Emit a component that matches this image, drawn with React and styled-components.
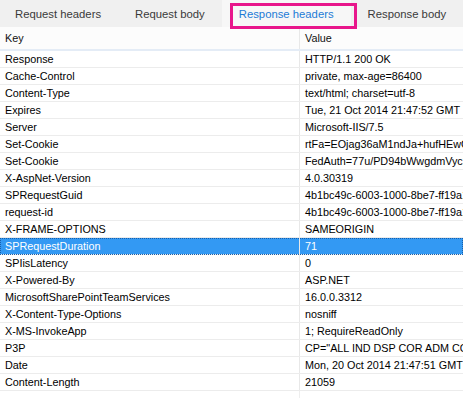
import React from 'react';
import styled, { createGlobalStyle } from 'styled-components';

const Global = createGlobalStyle`
    html, body {
        margin: 0;
        padding: 0;
        background: #ffffff;
    }
    body {
        font-family: "Liberation Sans", Arial, sans-serif;
    }
`;

const Frame = styled.div`
    position: relative;
    width: 463px;
    height: 414px;
    overflow: hidden;
    background: #ffffff;
`;

const TabBar = styled.div`
    display: flex;
    height: 27px;
    background: #f0f0f0;
    margin-left: -2px;
`;

const Tab = styled.div`
    display: flex;
    align-items: center;
    padding: 0 17px;
    font-size: 11.3px;
    white-space: nowrap;
    color: ${(p) => (p.active ? '#1c7bd6' : '#3a3a3a')};
    background: ${(p) => (p.active ? '#f7f7f7' : '#f0f0f0')};
`;

const Highlight = styled.div`
    position: absolute;
    left: 230px;
    top: 3px;
    width: 127px;
    height: 26px;
    box-sizing: border-box;
    border: 3px solid #e8168b;
    pointer-events: none;
`;

const Table = styled.div`
    display: flex;
    flex-direction: column;
`;

const HeaderRow = styled.div`
    display: grid;
    grid-template-columns: 300px 1fr;
    height: 22px;
    background: #fcfcfc;
    border-bottom: 2px solid #e4ecf6;
    font-size: 10.8px;
    color: #111;
`;

const Row = styled.div`
    display: grid;
    grid-template-columns: 300px 1fr;
    height: 17px;
    box-sizing: border-box;
    border-bottom: 1px solid #ececec;
    font-size: 10.8px;
    color: ${(p) => (p.selected ? '#ffffff' : '#000000')};
    background: ${(p) => (p.selected ? '#3399f3' : '#ffffff')};
    outline: ${(p) => (p.selected ? '1px dotted #1a5fa8' : 'none')};
    outline-offset: -1px;
`;

const Cell = styled.div`
    display: flex;
    align-items: center;
    padding-left: 5px;
    white-space: nowrap;
    overflow: hidden;
    border-right: ${(p) => (p.first ? '1px solid #e8e8e8' : 'none')};
`;

const Filler = styled.div`
    display: grid;
    grid-template-columns: 300px 1fr;
    height: 7px;
`;

const FillerCell = styled.div`
    border-right: 1px solid #eeeeee;
`;

const tabs = ['Request headers', 'Request body', 'Response headers', 'Response body'];

const headers = [
    ['Response', 'HTTP/1.1 200 OK'],
    ['Cache-Control', 'private, max-age=86400'],
    ['Content-Type', 'text/html; charset=utf-8'],
    ['Expires', 'Tue, 21 Oct 2014 21:47:52 GMT'],
    ['Server', 'Microsoft-IIS/7.5'],
    ['Set-Cookie', 'rtFa=EOjag36aM1ndJa+hufHEwQ5cdJ'],
    ['Set-Cookie', 'FedAuth=77u/PD94bWwgdmVyc2lvbj0'],
    ['X-AspNet-Version', '4.0.30319'],
    ['SPRequestGuid', '4b1bc49c-6003-1000-8be7-ff19a1b2'],
    ['request-id', '4b1bc49c-6003-1000-8be7-ff19a1b2'],
    ['X-FRAME-OPTIONS', 'SAMEORIGIN'],
    ['SPRequestDuration', '71'],
    ['SPIisLatency', '0'],
    ['X-Powered-By', 'ASP.NET'],
    ['MicrosoftSharePointTeamServices', '16.0.0.3312'],
    ['X-Content-Type-Options', 'nosniff'],
    ['X-MS-InvokeApp', '1; RequireReadOnly'],
    ['P3P', 'CP="ALL IND DSP COR ADM CONo CUR'],
    ['Date', 'Mon, 20 Oct 2014 21:47:51 GMT'],
    ['Content-Length', '21059'],
];

export default function App() {
    return (
        <Frame>
            <Global />
            <TabBar>
                {tabs.map((t) => (
                    <Tab key={t} active={t === 'Response headers'}>
                        {t}
                    </Tab>
                ))}
            </TabBar>
            <Table>
                <HeaderRow>
                    <Cell first>Key</Cell>
                    <Cell>Value</Cell>
                </HeaderRow>
                {headers.map(([k, v], i) => (
                    <Row key={i} selected={k === 'SPRequestDuration'}>
                        <Cell first>{k}</Cell>
                        <Cell>{v}</Cell>
                    </Row>
                ))}
                <Filler>
                    <FillerCell />
                    <div />
                </Filler>
            </Table>
            <Highlight />
        </Frame>
    );
}
